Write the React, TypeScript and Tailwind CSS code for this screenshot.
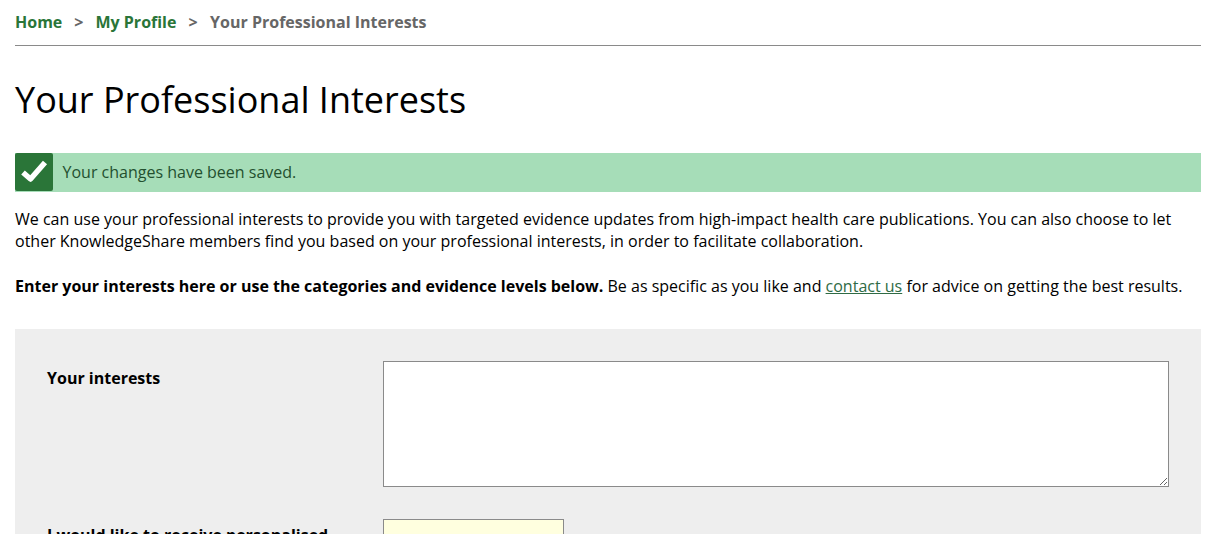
export default function App() {
  return (
    <div className="h-[534px] overflow-hidden bg-white pl-[15px] pr-3 font-['Open_Sans',sans-serif] text-base leading-[22px] text-black">
      <nav className="flex h-[46px] items-center border-b border-[#8a8a8a] pb-[2px] font-bold">
        <a className="text-[#2a7538]" href="#">Home</a>
        <span className="mx-3 text-[#666]">&gt;</span>
        <a className="text-[#2a7538]" href="#">My Profile</a>
        <span className="ml-3 mr-[12.5px] text-[#666]">&gt;</span>
        <span className="text-[#666]">Your Professional Interests</span>
      </nav>
      <h1 className="mt-[29px] text-[36px] leading-[50px] font-normal">Your Professional Interests</h1>
      <div className="mt-[28px] flex h-[39px] items-center bg-[#a6ddb8] pb-[2px] text-[#23502f]">
        <div className="h-[38px] w-[38px] self-start rounded-[2px] bg-[#2a7538]">
          <svg width="38" height="38" viewBox="0 0 38 38" aria-hidden="true">
            <path d="M8 19.5 L15.5 26 L30 9.5" fill="none" stroke="#fff" strokeWidth="5.5" strokeLinejoin="round" />
          </svg>
        </div>
        <span className="ml-[9.5px]">Your changes have been saved.</span>
      </div>
      <p className="mt-4">
        We can use your professional interests to provide you with targeted evidence updates from high-impact health care publications. You can also choose to let other KnowledgeShare members find you based on your professional interests, in order to facilitate collaboration.
      </p>
      <p className="mt-[23px]">
        <strong>Enter your interests here or use the categories and evidence levels below.</strong> Be as specific as you like and{" "}
        <a className="text-[#2f6b45] underline" href="#">contact us</a> for advice on getting the best results.
      </p>
      <form className="mt-[32px] bg-[#eeeeee] p-8">
        <div className="flex">
          <label className="w-[336px] shrink-0 pt-[6px] font-bold">Your interests</label>
          <textarea className="block h-[126px] w-[786px] resize border border-[#8a8a8a] bg-white" />
        </div>
        <div className="mt-8 flex">
          <label className="w-[336px] shrink-0 pt-[5px] font-bold">I would like to receive personalised</label>
          <div className="h-[40px] w-[181px] border border-[#8a8a8a] bg-[#ffffdf]" />
        </div>
      </form>
    </div>
  );
}
